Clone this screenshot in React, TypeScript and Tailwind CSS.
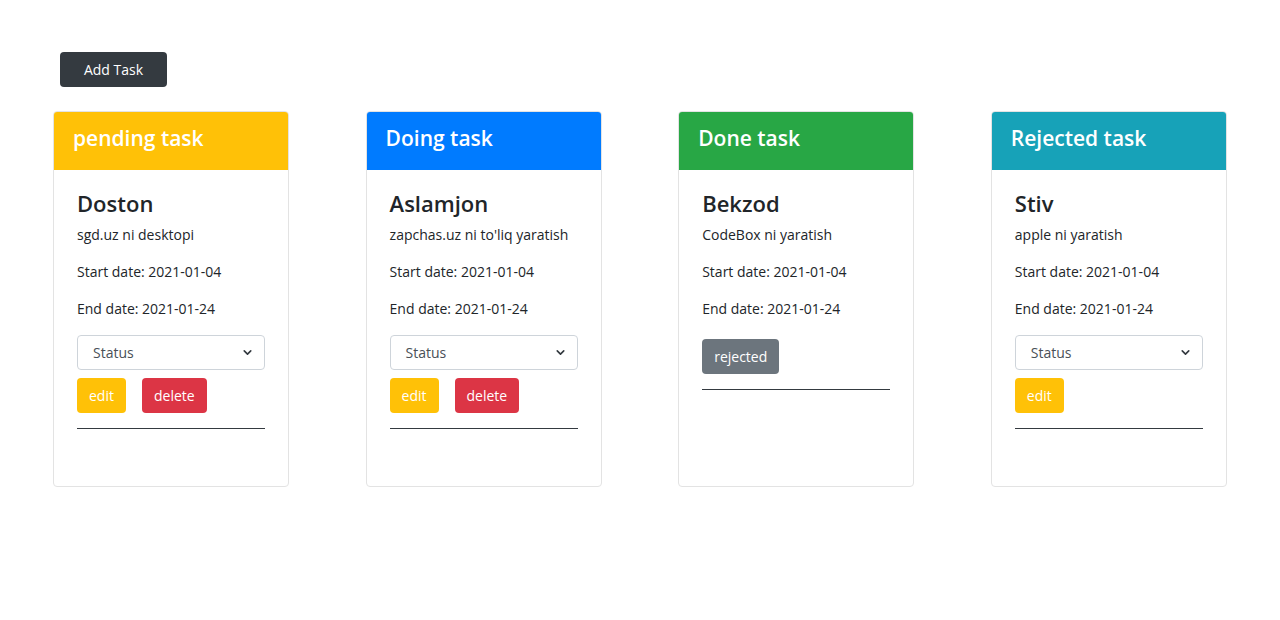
import { ChevronDown } from "lucide-react";

interface Task {
  header: string;
  headerBg: string;
  name: string;
  desc: string;
  mode: "pending" | "doing" | "done" | "rejected";
}

const tasks: Task[] = [
  { header: "pending task", headerBg: "bg-[#ffc107]", name: "Doston", desc: "sgd.uz ni desktopi", mode: "pending" },
  { header: "Doing task", headerBg: "bg-[#007bff]", name: "Aslamjon", desc: "zapchas.uz ni to'liq yaratish", mode: "doing" },
  { header: "Done task", headerBg: "bg-[#28a745]", name: "Bekzod", desc: "CodeBox ni yaratish", mode: "done" },
  { header: "Rejected task", headerBg: "bg-[#17a2b8]", name: "Stiv", desc: "apple ni yaratish", mode: "rejected" },
];

const StatusSelect = () => (
  <div className="flex h-[35px] w-full items-center justify-between rounded-[4px] border border-[#ced4da] bg-white pl-[15px] pr-[10px] text-[14px] text-[#495057]">
    <span>Status</span>
    <ChevronDown className="h-[13px] w-[13px] text-[#343a40]" strokeWidth={3} />
  </div>
);

const TaskCard = ({ task }: { task: Task }) => {
  return (
    <div className="flex w-[236px] flex-col overflow-hidden rounded-[4px] border border-[#e3e3e3] bg-white">
      {/* Header */}
      <div className={`${task.headerBg} flex h-[58px] items-center px-[19px] pb-[4px]`}>
        <h3 className="text-[21px] font-semibold text-white">{task.header}</h3>
      </div>

      {/* Body */}
      <div className="flex flex-col px-[23px] pt-[20px] pb-[57px] text-[#212529]">
        <h5 className="mb-[8px] text-[22px] leading-[26px] font-semibold">{task.name}</h5>
        <p className="mb-[16px] text-[14px] leading-[21px]">{task.desc}</p>
        <p className="mb-[16px] text-[14px] leading-[21px]">Start date: 2021-01-04</p>
        <p className="mb-[16px] text-[14px] leading-[21px]">End date: 2021-01-24</p>

        {task.mode === "done" ? (
          <div className="mt-[4px] flex">
            <button className="h-[35px] rounded-[4px] bg-[#6c757d] px-[12px] text-[14px] text-white">rejected</button>
          </div>
        ) : (
          <>
            <StatusSelect />
            <div className="mt-[8px] flex gap-[16px]">
              <button className="h-[35px] rounded-[4px] bg-[#ffc107] px-[12px] text-[14px] text-white">edit</button>
              {task.mode !== "rejected" && (
                <button className="h-[35px] rounded-[4px] bg-[#dc3545] px-[12px] text-[14px] text-white">delete</button>
              )}
            </div>
          </>
        )}

        <hr className="mt-[15px] border-t border-[#343a40]" />
      </div>
    </div>
  );
};

export default function App() {
  return (
    <div className="min-h-[620px] bg-white pt-[52px] font-['Open_Sans',sans-serif]">
      <div className="px-[60px]">
        <button className="h-[35px] w-[107px] rounded-[4px] bg-[#343a40] text-[14px] text-white">Add Task</button>
      </div>

      <div className="mt-[24px] flex items-stretch gap-[76.6px] px-[53px]">
        {tasks.map((t) => (
          <TaskCard key={t.name} task={t} />
        ))}
      </div>
    </div>
  );
}
